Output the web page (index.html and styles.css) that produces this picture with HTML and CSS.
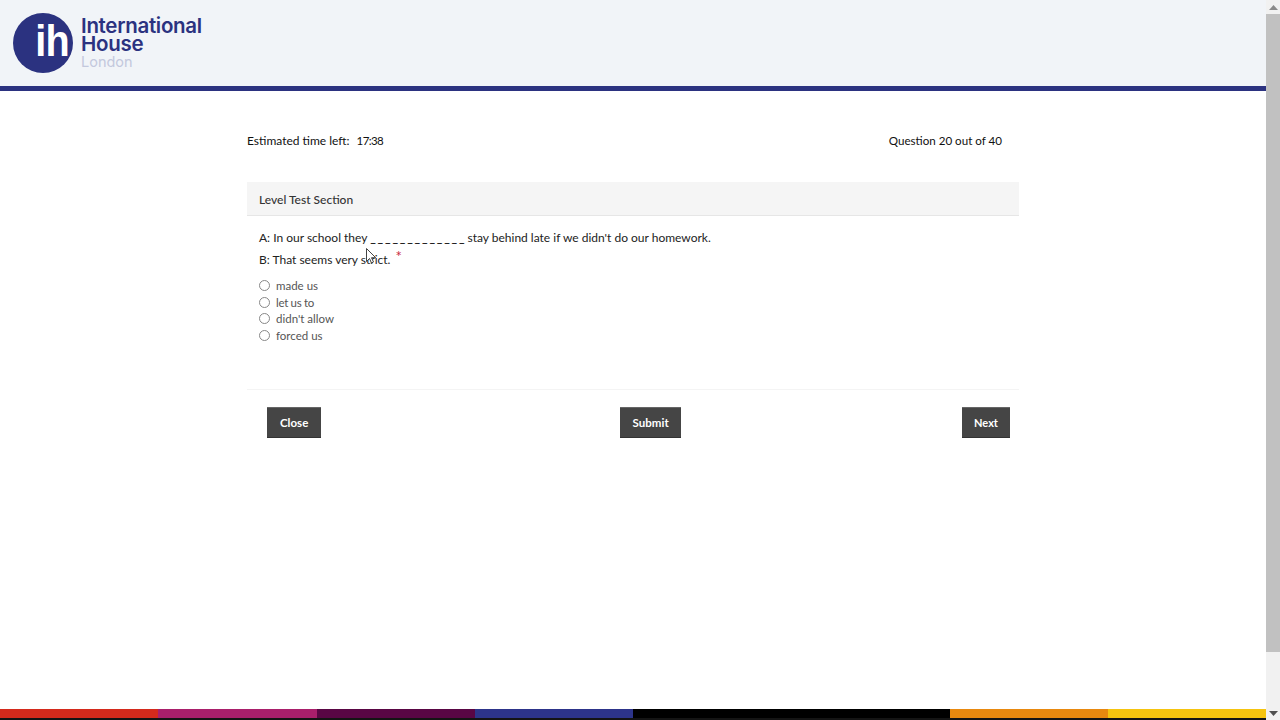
FILE: index.html
```html
<!DOCTYPE html>
<html lang="en">
<head>
<meta charset="utf-8">
<title>Level Test</title>
<link rel="stylesheet" href="styles.css">
</head>
<body>
<div class="window">
  <div class="page">
    <header class="site-header">
      <div class="logo">
        <div class="logo-mark"><span class="logo-ih">ih</span></div>
        <div class="logo-text">
          <div class="logo-name">International</div>
          <div class="logo-name">House</div>
          <div class="logo-city">London</div>
        </div>
      </div>
    </header>
    <main class="content">
      <div class="status">
        <div class="status-time"><span>Estimated time left:</span><span class="time-value">17:38</span></div>
        <div class="status-count">Question 20 out of 40</div>
      </div>
      <div class="section-title">Level Test Section</div>
      <div class="question">
        <p class="line">A: In our school they <span class="blank">_____________</span> stay behind late if we didn't do our homework.</p>
        <p class="line">B: That seems very strict. <span class="required">*</span></p>
        <div class="options">
          <label class="option"><span class="radio"></span>made us</label>
          <label class="option"><span class="radio"></span><span class="narrow">let us to</span></label>
          <label class="option"><span class="radio"></span>didn't allow</label>
          <label class="option"><span class="radio"></span>forced us</label>
        </div>
      </div>
      <div class="actions">
        <button class="btn btn-close">Close</button>
        <button class="btn btn-submit">Submit</button>
        <button class="btn btn-next">Next</button>
      </div>
    </main>
    <div class="colour-bar">
      <span class="c1"></span><span class="c2"></span><span class="c3"></span><span class="c4"></span><span class="c5"></span><span class="c6"></span><span class="c7"></span><span class="c8"></span>
    </div>
  </div>
  <div class="scrollbar">
    <div class="arrow"><svg width="9" height="5" viewBox="0 0 9 5"><path d="M4.5 0 9 5H0z" fill="#8a8a8a"/></svg></div>
    <div class="thumb"></div>
    <div class="track"></div>
    <div class="arrow"><svg width="9" height="5" viewBox="0 0 9 5"><path d="M0 0h9L4.500 5z" fill="#505050"/></svg></div>
  </div>
</div>
<svg class="cursor" width="11" height="16" viewBox="0 0 11 16"><path d="M.5.500v13l3-3 2 4.500 2-1-2-4.300h4.200z" fill="#fff" stroke="#444" stroke-width="1"/></svg>
</body>
</html>
```
FILE: styles.css
```css
* { box-sizing: border-box; }
html, body { margin: 0; height: 100%; overflow: hidden; }
body { font-family: "Lato", "Open Sans", sans-serif; color: #1c1c1c; background: #fff; position: relative; }

.window { display: flex; height: 720px; }
.page { flex: 1; min-width: 0; display: flex; flex-direction: column; }

.site-header { height: 91px; background: #f1f4f8; border-bottom: 5px solid #2b3280; padding: 13px 0 0 13px; }
.logo { display: flex; gap: 8px; }
.logo-mark { width: 60px; height: 60px; border-radius: 50%; background: #2b3280; display: flex; align-items: center; justify-content: center; overflow: hidden; }
.logo-ih { font-family: "Liberation Sans", sans-serif; font-weight: 700; font-size: 45px; line-height: 60px; letter-spacing: -1px; color: #fff; position: relative; top: -2px; left: 9px; transform: scaleX(.88); }
.logo-text { font-family: "Inter", "Liberation Sans", sans-serif; padding-top: 4px; }
.logo-name { font-size: 20.500px; line-height: 18px; font-weight: 600; color: #2b3280; letter-spacing: -.3px; }
.logo-city { font-size: 14.500px; line-height: 17px; color: #c3c8dd; }

.content { width: 772px; margin: 0 auto; flex: 1; }
.status { display: flex; justify-content: space-between; font-size: 12px; line-height: 16px; color: #111; padding: 42px 17px 0 0; height: 91px; }
.status-time { display: flex; gap: 7px; }
.time-value { font-size: 11.500px; letter-spacing: -.6px; }
.status-count { font-size: 11.600px; }

.section-title { height: 34px; background: #f5f5f5; border-bottom: 1px solid #e6e6e6; padding: 1px 12px 0; font-size: 12px; font-weight: 500; line-height: 33px; color: #333; }

.question { padding: 11px 12px 0; height: 174px; border-bottom: 1px solid #f4f4f4; }
.line { margin: 0; font-size: 12px; line-height: 22px; color: #222; white-space: nowrap; }
.blank { font-weight: 700; letter-spacing: 1.800px; margin-right: -2px; }
.required { color: #c9283e; font-size: 15px; line-height: 0; margin-left: 2px; position: relative; top: -2px; }
.options { margin-top: 6px; display: flex; flex-direction: column; }
.option { display: flex; align-items: center; gap: 6px; height: 16.700px; font-size: 11.500px; color: #555; }
.narrow { letter-spacing: -.3px; }
.radio { width: 11px; height: 11px; border: 1px solid #888; border-radius: 50%; background: #fff; }

.actions { display: flex; justify-content: space-between; padding: 17px 9px 0 20px; }
.btn { height: 31px; padding: 0 13px; border: 0; border-top: 1px solid #666; border-bottom: 1px solid #333; background: #454545; color: #fff; font-family: inherit; font-size: 11.500px; font-weight: 700; }
.btn-submit { width: 61px; padding: 0; margin-left: 18px; }
.btn-next { width: 48px; padding: 0; font-size: 11px; }

.colour-bar { display: flex; height: 11px; border-bottom: 2px solid #141414; }
.colour-bar span { flex: 1; }
.c1 { background: #d42a1c; }
.c2 { background: #a91f6b; }
.c3 { background: #590644; }
.c4 { background: #2d348a; }
.c5, .c6 { background: #000; }
.c7 { background: #e8890f; }
.c8 { background: #f5c40f; }

.scrollbar { width: 14px; background: #f1f1f1; display: flex; flex-direction: column; }
.arrow { height: 14px; display: flex; align-items: center; justify-content: center; }
.thumb { height: 638px; background: #c1c1c1; }
.track { flex: 1; }

.cursor { position: absolute; left: 366px; top: 248px; }
```
